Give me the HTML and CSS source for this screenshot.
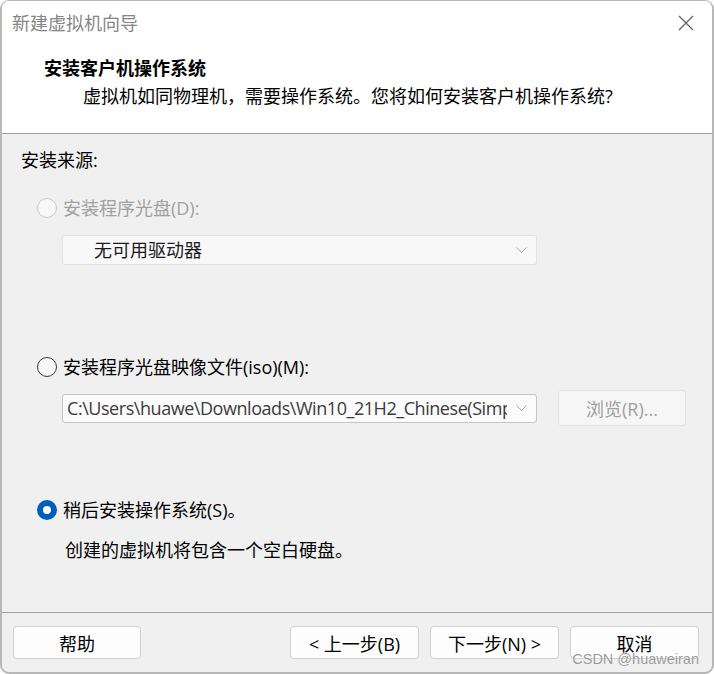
FILE: index.html
```html
<!DOCTYPE html>
<html lang="zh-CN">
<head>
    <meta charset="UTF-8">
    <meta name="viewport" content="width=device-width, initial-scale=1.0">
    <link rel="stylesheet" href="styles.css">
    <title>新建虚拟机向导</title>
</head>
<body>

<div class="window">
    <div class="titlebar">
        <span class="title">新建虚拟机向导</span>
        <svg class="close" width="16" height="16" viewBox="0 0 16 16">
            <path d="M1 1 L15 15 M15 1 L1 15" stroke="#606060" stroke-width="1.2" fill="none"/>
        </svg>
    </div>

    <div class="header">
        <h1>安装客户机操作系统</h1>
        <p>虚拟机如同物理机，需要操作系统。您将如何安装客户机操作系统?</p>
    </div>

    <div class="content">
        <div class="section-label">安装来源:</div>

        <div class="radio-row disabled row-disc">
            <span class="radio"></span>
            <span>安装程序光盘(D):</span>
        </div>
        <div class="combo combo-disabled">
            <span class="combo-text">无可用驱动器</span>
            <svg class="chevron" width="11" height="7" viewBox="0 0 11 7">
                <path d="M0.5 0.5 L5.5 5.5 L10.5 0.5" stroke="#a8a8a8" stroke-width="1" fill="none"/>
            </svg>
        </div>

        <div class="radio-row row-iso">
            <span class="radio"></span>
            <span>安装程序光盘映像文件(iso)(M):</span>
        </div>
        <div class="iso-row">
            <div class="combo combo-iso">
                <span class="combo-text path">C:\Users\huawe\Downloads\Win10_21H2_Chinese(Simplified)_x64.iso</span>
                <svg class="chevron" width="11" height="7" viewBox="0 0 11 7">
                    <path d="M0.5 0.5 L5.5 5.5 L10.5 0.5" stroke="#a8a8a8" stroke-width="1" fill="none"/>
                </svg>
            </div>
            <button class="btn btn-disabled">浏览(R)...</button>
        </div>

        <div class="radio-row row-later">
            <span class="radio checked"></span>
            <span>稍后安装操作系统(S)。</span>
        </div>
        <div class="note">创建的虚拟机将包含一个空白硬盘。</div>
    </div>

    <div class="footer">
        <button class="btn btn-help">帮助</button>
        <div class="nav">
            <button class="btn">&lt; 上一步(B)</button>
            <button class="btn">下一步(N) &gt;</button>
            <button class="btn">取消</button>
        </div>
    </div>

    <div class="watermark">CSDN @huaweiran</div>
</div>

</body>
</html>
```

FILE: styles.css
```css
body {
    margin: 0;
    background-color: #ffffff;
    font-family: 'Open Sans', 'Noto Sans CJK SC', sans-serif;
    font-size: 18px;
    color: #000;
}

.window {
    position: relative;
    width: 714px;
    height: 674px;
    box-sizing: border-box;
    border: 2px solid #b8b8b8;
    border-top-width: 1px;
    border-radius: 9px;
    overflow: hidden;
    display: flex;
    flex-direction: column;
    background-color: #f0f0f0;
}

.titlebar {
    height: 43px;
    flex: none;
    background-color: #fff;
    display: flex;
    align-items: center;
    justify-content: space-between;
    padding: 0 18px 0 10px;
}

.title {
    color: #858585;
    line-height: 26px;
}

.header {
    flex: none;
    height: 90px;
    box-sizing: border-box;
    background-color: #fff;
    border-bottom: 1px solid #a0a0a0;
    padding-top: 11px;
}

.header h1 {
    margin: 0 0 0 42px;
    font-size: 18px;
    font-weight: 700;
    line-height: 26px;
}

.header p {
    margin: 2px 0 0 81px;
    line-height: 26px;
}

.content {
    flex: 1;
    padding: 13px 0 0 19px;
}

.section-label {
    line-height: 26px;
}

.radio-row {
    display: flex;
    align-items: center;
    gap: 6px;
    margin-left: 16px;
    line-height: 26px;
}

.row-disc {
    margin-top: 22px;
}

.row-iso {
    margin-top: 89px;
}

.row-later {
    margin-top: 71px;
}

.disabled {
    color: #a0a0a0;
}

.radio {
    width: 20px;
    height: 20px;
    box-sizing: border-box;
    border-radius: 50%;
    border: 1.5px solid #3a3a3a;
    background-color: #f7f7f7;
    flex: none;
}

.disabled .radio {
    border: 1px solid #c8c8c8;
    background-color: #f8f8f8;
}

.radio.checked {
    border: 6px solid #005fb8;
    background-color: #fff;
}

.combo {
    display: flex;
    align-items: center;
    box-sizing: border-box;
    width: 475px;
    border-radius: 3px;
    padding-right: 9px;
}

.combo-disabled {
    margin: 14px 0 0 41px;
    height: 30px;
    background-color: #f8f8f8;
    border: 1px solid #e2e2e2;
    padding-left: 31px;
}

.combo-text {
    flex: 1;
    white-space: nowrap;
    overflow: hidden;
    line-height: 26px;
}

.combo-disabled .combo-text {
    color: #1a1a1a;
}

.chevron {
    flex: none;
    margin-left: 9px;
}

.iso-row {
    display: flex;
    align-items: center;
    gap: 21px;
    margin: 10px 0 0 41px;
    height: 36px;
}

.combo-iso {
    height: 29px;
    background-color: #fbfbfb;
    border: 1px solid #c4c4c4;
    padding-left: 4px;
}

.path {
    color: #3c3c3c;
    letter-spacing: -0.45px;
}

.note {
    margin: 14px 0 0 44px;
    line-height: 26px;
}

.btn {
    width: 129px;
    height: 33px;
    box-sizing: border-box;
    font-family: inherit;
    font-size: 18px;
    color: #000;
    background-color: #fdfdfd;
    border: 1px solid #d0d0d0;
    border-radius: 4px;
    padding: 0;
}

.btn-help {
    width: 128px;
}

.btn-disabled {
    width: 128px;
    height: 36px;
    background-color: #f6f6f6;
    border-color: #e3e3e3;
    color: #a0a0a0;
}

.footer {
    flex: none;
    height: 60px;
    box-sizing: border-box;
    border-top: 1px solid #a0a0a0;
    display: flex;
    justify-content: space-between;
    align-items: flex-start;
    padding: 13px 13px 0 11px;
}

.nav {
    display: flex;
    gap: 11px;
}

.watermark {
    position: absolute;
    right: 13px;
    bottom: 5px;
    font-family: 'Liberation Sans', sans-serif;
    font-size: 14.5px;
    color: rgba(120, 120, 120, 0.75);
    text-shadow: 0 0 1px #fff;
}
```
